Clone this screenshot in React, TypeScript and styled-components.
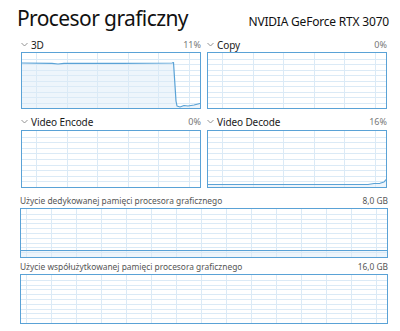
import React from "react";
import styled, { createGlobalStyle } from "styled-components";

const GlobalStyle = createGlobalStyle`
  html, body { margin: 0; padding: 0; background: #ffffff; }
  body { font-family: "Noto Sans", "Open Sans", sans-serif; -webkit-font-smoothing: antialiased; }
`;

const BORDER = "#5aa2d6";
const GRID = "#dbeaf6";
const FILL = "#eef5fb";
const LINE = "#5aa2d6";

const Page = styled.div`
  width: 400px;
  height: 331px;
  box-sizing: border-box;
  padding: 3px 11px 0 17px;
  overflow: hidden;
`;

const Header = styled.div`
  display: flex;
  justify-content: space-between;
  align-items: baseline;
  height: 34px;
`;

const Title = styled.h1`
  margin: 0;
  font-weight: 400;
  font-size: 21px;
  line-height: 30px;
  letter-spacing: -0.6px;
  color: #111;
`;

const GpuName = styled.div`
  font-size: 12px;
  letter-spacing: -0.2px;
  color: #111;
`;

const GraphGrid = styled.div`
  display: grid;
  grid-template-columns: 180px 180px;
  column-gap: 6px;
  row-gap: 4px;
  margin-left: 4px;
`;

const Panel = styled.div`
  display: flex;
  flex-direction: column;
`;

const LabelRow = styled.div<{ $h?: number }>`
  display: flex;
  align-items: center;
  justify-content: space-between;
  height: ${(p) => p.$h ?? 15}px;
`;

const LabelLeft = styled.div`
  display: flex;
  align-items: center;
  gap: 3px;
  font-size: 10px;
  letter-spacing: -0.1px;
  color: #1a1a1a;
`;

const Percent = styled.div`
  font-size: 9px;
  color: #777;
`;

const ChartBox = styled.div<{ $h: number }>`
  height: ${(p) => p.$h}px;
  border: 1px solid ${BORDER};
  box-sizing: border-box;
  background: #fff;
  overflow: hidden;
  svg { display: block; }
`;

const MemSection = styled.div`
  margin-left: 3px;
  width: 368px;
  display: flex;
  flex-direction: column;
`;

const MemLabel = styled.div<{ $h?: number }>`
  display: flex;
  justify-content: space-between;
  align-items: center;
  height: ${(p) => p.$h ?? 15}px;
  font-size: 8.4px;
  color: #555;
`;

const MemGap = styled.div`
  height: 5px;
`;

const Chevron = () => (
  <svg width="7" height="5" viewBox="0 0 7 5">
    <polyline points="0.5,1 3.5,4 6.5,1" fill="none" stroke="#888" strokeWidth="0.9" />
  </svg>
);

type ChartProps = {
  w: number;
  h: number;
  vStart: number;
  vStep: number;
  rows: number;
  line?: string;
  fill?: string;
};

const Chart: React.FC<ChartProps> = ({ w, h, vStart, vStep, rows, line, fill }) => {
  const iw = w - 2;
  const ih = h - 2;
  const vs: number[] = [];
  for (let x = vStart; x < iw; x += vStep) vs.push(x);
  const hs: number[] = [];
  for (let i = 1; i < rows; i++) hs.push((ih * i) / rows);
  return (
    <ChartBox $h={h}>
      <svg width={iw} height={ih} viewBox={`0 0 ${iw} ${ih}`}>
        {fill && <path d={fill} fill={FILL} />}
        {hs.map((y) => (
          <line key={"h" + y} x1={0} x2={iw} y1={Math.round(y) + 0.5} y2={Math.round(y) + 0.5} stroke={GRID} strokeWidth={1} />
        ))}
        {vs.map((x) => (
          <line key={"v" + x} x1={Math.round(x) + 0.5} x2={Math.round(x) + 0.5} y1={0} y2={ih} stroke={GRID} strokeWidth={1} />
        ))}
        {line && <path d={line} fill="none" stroke={LINE} strokeWidth={1.2} strokeLinejoin="round" />}
      </svg>
    </ChartBox>
  );
};

const line3D =
  "M0,10 L30,10.3 L36,11 L42,10.3 L60,10.3 L100,10.3 L150,10 L151.5,9.5 L154,48 L155,53 L158,54 L162,52.5 L166,53 L172,52 L178,50.5";
const fill3D = line3D + " L178,55 L0,55 Z";

const lineDecode =
  "M0,53.5 L160,53.5 L166,52.5 L172,52.3 L176,51 L178,48.5";
const fillDecode = lineDecode + " L178,56 L0,56 Z";

const lineMem1 = "M0,41.5 L366,41.5";
const fillMem1 = "M0,41.5 L366,41.5 L366,48 L0,48 Z";

export default function App() {
  return (
    <>
      <GlobalStyle />
      <Page>
        <Header>
          <Title>Procesor graficzny</Title>
          <GpuName>NVIDIA GeForce RTX 3070</GpuName>
        </Header>
        <GraphGrid>
          <Panel>
            <LabelRow>
              <LabelLeft>
                <Chevron />
                3D
              </LabelLeft>
              <Percent>11%</Percent>
            </LabelRow>
            <Chart w={180} h={57} vStart={14} vStep={30.5} rows={10} line={line3D} fill={fill3D} />
          </Panel>
          <Panel>
            <LabelRow>
              <LabelLeft>
                <Chevron />
                Copy
              </LabelLeft>
              <Percent>0%</Percent>
            </LabelRow>
            <Chart w={180} h={57} vStart={14} vStep={30.5} rows={10} />
          </Panel>
          <Panel>
            <LabelRow $h={17}>
              <LabelLeft>
                <Chevron />
                Video Encode
              </LabelLeft>
              <Percent>0%</Percent>
            </LabelRow>
            <Chart w={180} h={58} vStart={14} vStep={30.5} rows={10} />
          </Panel>
          <Panel>
            <LabelRow $h={17}>
              <LabelLeft>
                <Chevron />
                Video Decode
              </LabelLeft>
              <Percent>16%</Percent>
            </LabelRow>
            <Chart w={180} h={58} vStart={14} vStep={30.5} rows={10} line={lineDecode} fill={fillDecode} />
          </Panel>
        </GraphGrid>
        <MemGap />
        <MemSection>
          <MemLabel>
            <span>Użycie dedykowanej pamięci procesora graficznego</span>
            <span>8,0 GB</span>
          </MemLabel>
          <Chart w={368} h={50} vStart={5} vStep={25} rows={10} line={lineMem1} fill={fillMem1} />
          <MemLabel $h={16}>
            <span>Użycie współużytkowanej pamięci procesora graficznego</span>
            <span>16,0 GB</span>
          </MemLabel>
          <Chart w={368} h={50} vStart={5} vStep={25} rows={10} />
        </MemSection>
      </Page>
    </>
  );
}
